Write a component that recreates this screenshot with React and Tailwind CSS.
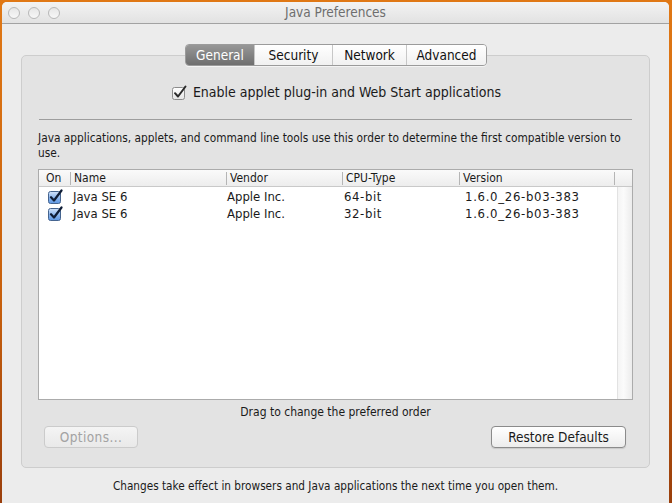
const font = { fontFamily: '"DejaVu Sans Condensed", "DejaVu Sans", sans-serif' }

function BlueCheck() {
  return (
    <svg width="15" height="15" viewBox="0 0 15 15" className="block">
      <defs>
        <linearGradient id="cb" x1="0" y1="0" x2="0" y2="1">
          <stop offset="0" stopColor="#d3e4fa" />
          <stop offset="0.5" stopColor="#8fb8ee" />
          <stop offset="1" stopColor="#5d97e3" />
        </linearGradient>
      </defs>
      <rect x="0.5" y="2.5" width="12" height="12" rx="2" fill="url(#cb)" stroke="#45648f" />
      <path d="M3 8.2 L6 11.5 L13.5 1.5" fill="none" stroke="#0f1d36" strokeWidth="2.2" strokeLinecap="round" strokeLinejoin="round" />
    </svg>
  )
}

function GrayCheck() {
  return (
    <svg width="15" height="15" viewBox="0 0 15 15" className="block">
      <defs>
        <linearGradient id="cg" x1="0" y1="0" x2="0" y2="1">
          <stop offset="0" stopColor="#ffffff" />
          <stop offset="1" stopColor="#e4e4e4" />
        </linearGradient>
      </defs>
      <rect x="0.5" y="2.5" width="12" height="12" rx="2" fill="url(#cg)" stroke="#8c8c8c" />
      <path d="M3 8.2 L6 11.5 L13.5 1.5" fill="none" stroke="#2a2a2a" strokeWidth="2" strokeLinecap="round" strokeLinejoin="round" />
    </svg>
  )
}

const tabs = [
  { label: "General", w: "w-[68px]" },
  { label: "Security", w: "w-[78px]" },
  { label: "Network", w: "w-[74px]" },
  { label: "Advanced", w: "w-[80px]" },
]

const rows = [
  { name: "Java SE 6", vendor: "Apple Inc.", cpu: "64-bit", version: "1.6.0_26-b03-383" },
  { name: "Java SE 6", vendor: "Apple Inc.", cpu: "32-bit", version: "1.6.0_26-b03-383" },
]

export default function App() {
  return (
    <div className="w-[672px] h-[503px] overflow-hidden bg-[linear-gradient(180deg,#e07815,#c7600d_60%,#9a3f0c)] pt-[2px] pl-[2px] pr-[3px] text-[#1a1a1a]" style={font}>
      <div className="h-[520px] bg-[#ececec] rounded-t-[5px] flex flex-col">
        {/* title bar */}
        <div className="h-[22px] shrink-0 relative flex items-center justify-center rounded-t-[5px] border-b border-[#a2a2a2] bg-[linear-gradient(180deg,#f3f3f3,#e2e2e2)]">
          <div className="absolute left-[6px] top-[5px] flex gap-[8px]">
            {[0, 1, 2].map((i) => (
              <div key={i} className="w-[12px] h-[12px] rounded-full border border-[#b8b8b8] bg-[linear-gradient(180deg,#e6e6e6,#f7f7f7)]" />
            ))}
          </div>
          <span className="text-[13.5px] text-[#6e6e6e]">Java Preferences</span>
        </div>

        <div className="px-[19px] pt-[20px]">
          {/* segmented tabs */}
          <div className="relative z-10 flex justify-center pl-[1px]">
            <div className="flex h-[22px] rounded-[4px] border border-[#9b9b9b] overflow-hidden shadow-[0_1px_0_rgba(255,255,255,0.6)]">
              {tabs.map((t, i) => (
                <div
                  key={t.label}
                  className={
                    i === 0
                      ? `${t.w} flex items-center justify-center text-[13.5px] text-white bg-[linear-gradient(180deg,#979797,#6f6f6f)]`
                      : `${t.w} flex items-center justify-center text-[13.5px] text-[#111] bg-[linear-gradient(180deg,#ffffff,#f1f1f1)] border-l border-[#c7c7c7]`
                  }
                >
                  {t.label}
                </div>
              ))}
            </div>
          </div>

          {/* tab panel */}
          <div className="-mt-[11px] h-[413px] rounded-[5px] border border-[#cdcdcd] bg-[#e3e3e3] px-[16px] pt-[28px] flex flex-col">
            <div className="flex items-center justify-center gap-[6px] h-[16px] pl-[2px]">
              <GrayCheck />
              <span className="text-[14px]">Enable applet plug-in and Web Start applications</span>
            </div>

            <div className="mt-[19px] mx-[1px] h-px bg-[#9d9d9d]" />

            <p className="mt-[11px] text-[11.8px] leading-[15px] pr-[4px]">
              Java applications, applets, and command line tools use this order to determine the first compatible version to use.
            </p>

            {/* JRE table */}
            <div className="mt-[8px] h-[231px] border border-[#ababab] bg-white flex flex-col">
              <div className="h-[17px] shrink-0 flex items-center text-[12px] border-b border-[#c9c9c9] bg-[linear-gradient(180deg,#fafafa,#ededed)]">
                <div className="w-[32px] pl-[7px] border-r border-[#b5b5b5] leading-[13px]">On</div>
                <div className="w-[156px] pl-[3px] border-r border-[#b5b5b5] leading-[13px]">Name</div>
                <div className="w-[116px] pl-[3px] border-r border-[#b5b5b5] leading-[13px]">Vendor</div>
                <div className="w-[117px] pl-[3px] border-r border-[#b5b5b5] leading-[13px]">CPU-Type</div>
                <div className="w-[155px] pl-[3px] border-r border-[#b5b5b5] leading-[13px]">Version</div>
              </div>
              <div className="flex-1 flex">
                <div className="flex-1 pt-[1px]">
                  {rows.map((r, i) => (
                    <div key={i} className="h-[17px] flex items-center text-[13px]">
                      <div className="w-[32px] pl-[9px]">
                        <BlueCheck />
                      </div>
                      <div className="w-[156px] pl-[2px]">{r.name}</div>
                      <div className="w-[116px]">{r.vendor}</div>
                      <div className="w-[117px] pl-[1px] tracking-[0.6px]">{r.cpu}</div>
                      <div className="pl-[5px] tracking-[0.7px]">{r.version}</div>
                    </div>
                  ))}
                </div>
                <div className="w-[15px] border-l border-[#e2e2e2] bg-[linear-gradient(90deg,#f4f4f4,#fbfbfb_40%,#ececec)]" />
              </div>
            </div>

            <div className="mt-[5px] text-center text-[12px] leading-[14px]">Drag to change the preferred order</div>

            <div className="mt-[7px] flex justify-between pl-[6px] pr-[7px]">
              <div className="w-[94px] h-[22px] rounded-[4px] border border-[#cbcbcb] bg-[linear-gradient(180deg,#f4f4f4,#e9e9e9)] flex items-center justify-center text-[13.5px] tracking-[0.4px] text-[#a3a3a3]">
                Options...
              </div>
              <div className="w-[135px] h-[22px] rounded-[4px] border border-[#8b8b8b] bg-[linear-gradient(180deg,#ffffff,#ececec)] shadow-[0_1px_1px_rgba(0,0,0,0.12)] flex items-center justify-center text-[13.5px]">
                Restore Defaults
              </div>
            </div>
          </div>

          <div className="mt-[10px] text-center text-[11.7px]">
            Changes take effect in browsers and Java applications the next time you open them.
          </div>
        </div>
      </div>
    </div>
  )
}
